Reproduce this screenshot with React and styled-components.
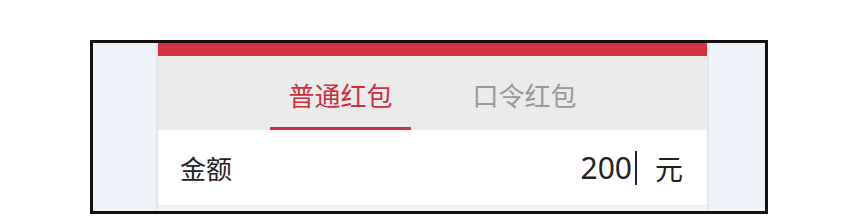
import React from 'react'
import styled, { createGlobalStyle } from 'styled-components'

const GlobalStyle = createGlobalStyle`
  html, body {
    margin: 0;
    padding: 0;
    background: #ffffff;
    font-family: "Noto Sans CJK SC", "Noto Sans", sans-serif;
  }
`

const tabs = [
  { label: '普通红包', active: true },
  { label: '口令红包', active: false }
]

const App = () =>
  <S.Page>
    <GlobalStyle />
    <S.Frame>
      <S.Card>
        <S.TopBar />
        <S.Tabs>
          {tabs.map(tab =>
            <S.Tab key={tab.label} active={tab.active}>{tab.label}</S.Tab>
          )}
        </S.Tabs>
        <S.Row>
          <S.Label>金额</S.Label>
          <S.Amount>
            <S.Value>200</S.Value>
            <S.Caret />
            <S.Unit>元</S.Unit>
          </S.Amount>
        </S.Row>
        <S.NextRow />
      </S.Card>
    </S.Frame>
  </S.Page>

const S = {
  Page: styled.div`
    padding: 40px 0 0 90px;
  `,
  Frame: styled.div`
    box-sizing: border-box;
    width: 678px;
    height: 174px;
    border: 3px solid #111;
    background: #eef2f9;
    padding-left: 65px;
    display: flex;
    overflow: hidden;
  `,
  Card: styled.div`
    width: 549px;
    display: flex;
    flex-direction: column;
    box-shadow: 0 0 3px rgba(0, 0, 0, 0.18);
  `,
  TopBar: styled.div`
    height: 13px;
    background: #d2333f;
  `,
  Tabs: styled.div`
    height: 74px;
    background: #ebebeb;
    display: flex;
    justify-content: center;
    gap: 43px;
  `,
  Tab: styled.div`
    box-sizing: border-box;
    width: 141px;
    display: flex;
    align-items: center;
    justify-content: center;
    padding-top: 6px;
    font-size: 26px;
    color: ${props => props.active ? '#c83240' : '#999999'};
    border-bottom: 3px solid ${props => props.active ? '#c83240' : 'transparent'};
  `,
  Row: styled.div`
    height: 75px;
    background: #ffffff;
    display: flex;
    align-items: center;
    justify-content: space-between;
    padding: 0 24px 0 22px;
  `,
  Label: styled.span`
    font-size: 26px;
    color: #222;
  `,
  Amount: styled.div`
    display: flex;
    align-items: center;
  `,
  Value: styled.span`
    font-family: "Noto Sans", sans-serif;
    font-size: 30px;
    color: #222;
  `,
  Caret: styled.span`
    width: 2px;
    height: 34px;
    margin: 0 18px 0 3px;
    background: #1a2440;
  `,
  Unit: styled.span`
    font-size: 28px;
    color: #222;
  `,
  NextRow: styled.div`
    flex: 1;
    background: #f3f3f3;
    border-top: 1px solid #e6e6e6;
  `
}

export default App
